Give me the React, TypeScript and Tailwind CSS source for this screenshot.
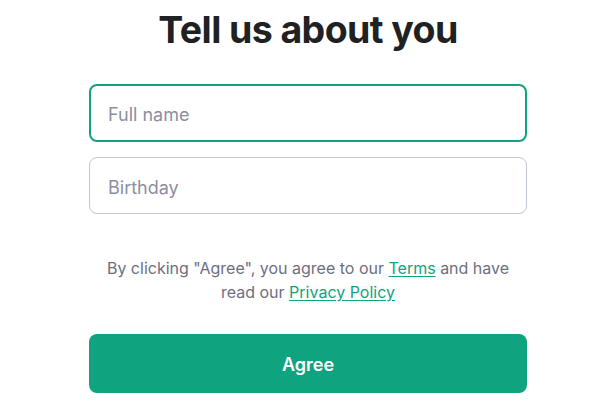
export default function App() {
  return (
    <div className="min-h-[400px] bg-white" style={{ fontFamily: 'Inter, "Noto Sans", sans-serif' }}>
      <div className="ml-[89px] w-[438px] flex flex-col">
        <h1 className="mt-[6px] text-center text-[37.5px] leading-[48px] font-bold tracking-[-0.6px] text-[#202123]">
          Tell us about you
        </h1>
        <input
          placeholder="Full name"
          className="mt-[30px] h-[58px] rounded-[8px] border-2 border-[#10a37f] px-[17px] pt-[3px] text-[18px] text-[#2d333a] placeholder:text-[#8e8ea0] outline-none"
        />
        <input
          placeholder="Birthday"
          className="mt-[15px] h-[57px] rounded-[8px] border border-[#c2c8d0] px-[18px] pt-[3px] text-[18px] text-[#2d333a] placeholder:text-[#8e8ea0] outline-none"
        />
        <p className="mt-[42px] px-[10px] text-center text-[16px] leading-[24px] text-[#6e6e80]">
          By clicking "Agree", you agree to our{' '}
          <a href="#" className="text-[#10a37f] underline underline-offset-2">Terms</a> and have read our{' '}
          <a href="#" className="text-[#10a37f] underline underline-offset-2">Privacy Policy</a>
        </p>
        <button className="mt-[30px] h-[59px] rounded-[8px] bg-[#10a37f] pt-[2px] text-[18px] font-semibold text-white">
          Agree
        </button>
      </div>
    </div>
  )
}
